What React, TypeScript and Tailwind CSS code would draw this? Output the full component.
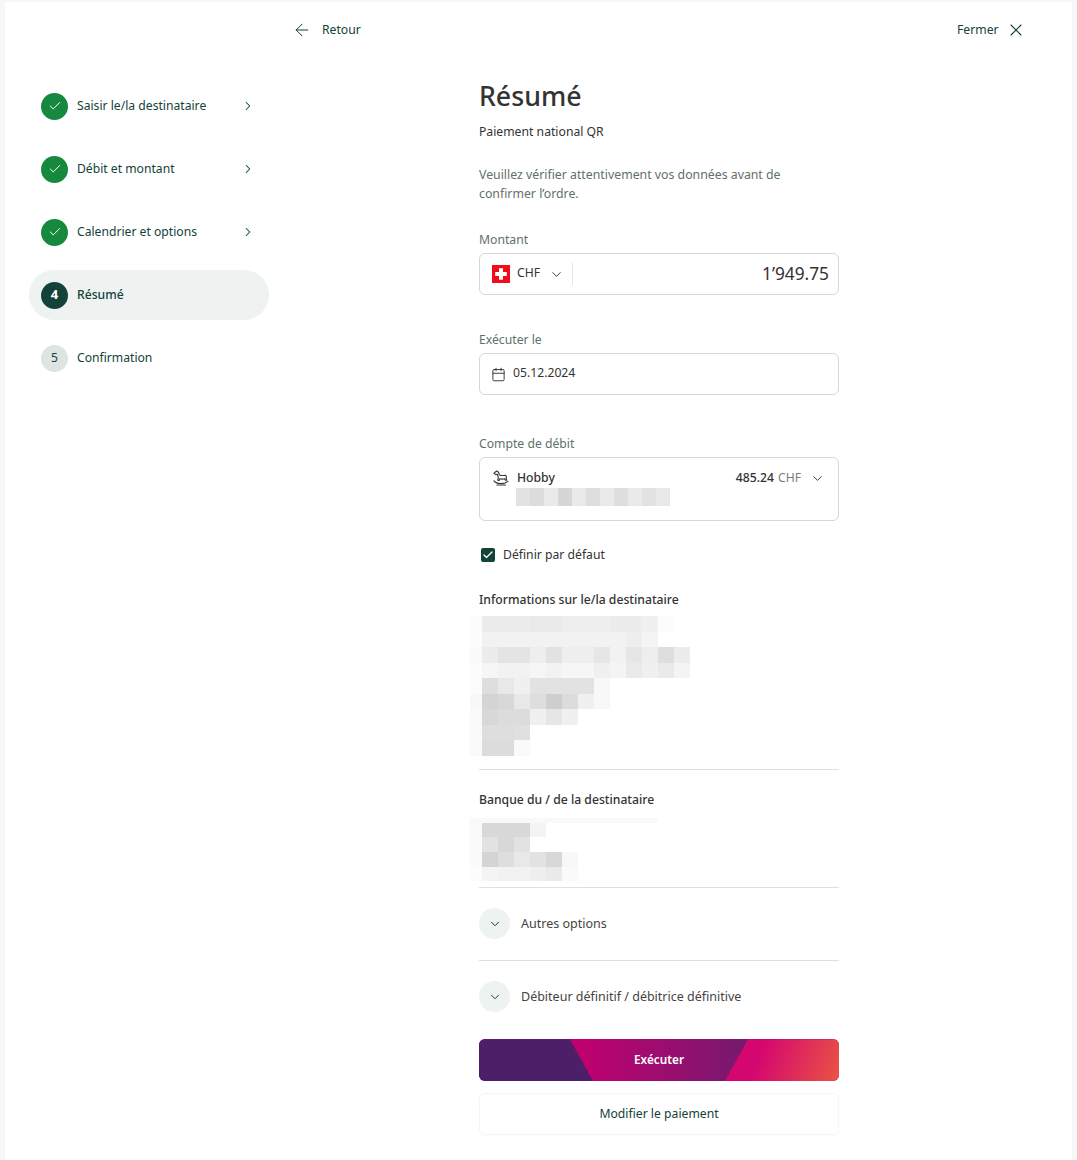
import { ArrowLeft, Check, ChevronDown, ChevronRight, X, Calendar } from 'lucide-react';

const font = { fontFamily: '"Noto Sans", sans-serif' };

const steps = [
  { label: 'Saisir le/la destinataire', state: 'done' },
  { label: 'Débit et montant', state: 'done' },
  { label: 'Calendrier et options', state: 'done' },
  { label: 'Résumé', state: 'active', num: 4 },
  { label: 'Confirmation', state: 'todo', num: 5 },
];

// masked personal data in the reference: rows of grey squares, each value is the grey level
const recipientMosaic = [
  [252, 236, 236, 236, 234, 234, 238, 238, 238, 236, 236, 240, 252, 255, 255, 255],
  [252, 242, 242, 242, 242, 242, 242, 242, 242, 242, 238, 244, 255, 255, 255, 255],
  [250, 236, 228, 228, 238, 226, 238, 238, 230, 242, 230, 238, 222, 236, 255, 255],
  [252, 246, 242, 242, 246, 242, 246, 246, 240, 244, 234, 240, 234, 244, 255, 255],
  [252, 222, 232, 240, 226, 226, 226, 226, 248, 255, 255, 255, 255, 255, 255, 255],
  [248, 212, 216, 232, 222, 206, 220, 240, 248, 255, 255, 255, 255, 255, 255, 255],
  [250, 216, 220, 220, 240, 230, 240, 255, 255, 255, 255, 255, 255, 255, 255, 255],
  [250, 222, 222, 224, 255, 255, 255, 255, 255, 255, 255, 255, 255, 255, 255, 255],
  [250, 220, 220, 250, 255, 255, 255, 255, 255, 255, 255, 255, 255, 255, 255, 255],
];

const bankMosaic = [
  [250, 216, 216, 216, 244, 255, 255, 255],
  [250, 226, 216, 226, 255, 255, 255, 255],
  [250, 212, 222, 232, 226, 216, 248, 255],
  [252, 244, 242, 242, 238, 234, 250, 255],
];

const accountMosaic = [226, 220, 234, 214, 234, 222, 234, 222, 234, 226, 232];

function Mosaic({ rows, rowClass }: { rows: number[][]; rowClass: string }) {
  return (
    <div className="flex flex-col ml-[-9px]">
      {rows.map((row, i) => (
        <div key={i} className={'flex ' + rowClass}>
          {row.map((v, j) => (
            <div
              key={j}
              className={j === 0 ? 'w-3 h-full' : 'w-4 h-full'}
              style={{ backgroundColor: `rgb(${v},${v},${v})` }}
            />
          ))}
        </div>
      ))}
    </div>
  );
}

function StepRow({ step }: { step: (typeof steps)[number] }) {
  return (
    <div
      className={
        'flex items-center h-[50px] w-[240px] pl-[12px] rounded-full ' +
        (step.state === 'active' ? 'bg-[#eef2f1]' : '')
      }
    >
      {step.state === 'done' && (
        <div className="w-[27px] h-[27px] rounded-full bg-[#16893f] flex items-center justify-center text-white">
          <Check size={14} strokeWidth={1.7} />
        </div>
      )}
      {step.state === 'active' && (
        <div className="w-[27px] h-[27px] rounded-full bg-[#134239] flex items-center justify-center text-white text-[13px] font-bold">
          {step.num}
        </div>
      )}
      {step.state === 'todo' && (
        <div className="w-[27px] h-[27px] rounded-full bg-[#dde4e2] flex items-center justify-center text-[#134239] text-[12px]">
          {step.num}
        </div>
      )}
      <span
        className={
          'ml-[9px] text-[12.15px] leading-[18px] text-[#134239] flex-1 ' +
          (step.state === 'active' ? 'font-medium' : '')
        }
      >
        {step.label}
      </span>
      {step.state === 'done' && <ChevronRight size={14} strokeWidth={1.8} className="text-[#134239] mr-[14px]" />}
    </div>
  );
}

function Flag() {
  return (
    <svg width="18" height="18" viewBox="0 0 18 18">
      <rect width="18" height="18" fill="#f00c18" />
      <path d="M7 3.2h4v3.8h3.8v4H11v3.8H7V11H3.2V7H7z" fill="#fff" />
    </svg>
  );
}

function RockingHorse() {
  return (
    <svg width="16" height="16" viewBox="0 0 16 16" fill="none" stroke="#333" strokeWidth="1.1" strokeLinecap="round" strokeLinejoin="round">
      <path d="M1 3.2 3.6 1l2 1.2.8 2.8c1.8.6 4.4.6 6 .2l1 1.1-.3 2.2.7 1.6-1.4.2-.7-1.6c-1.6.5-3.4.5-4.8 0l-.8 1.7-1.4-.2.7-2.6-1.1-3.4-1.5.4z" />
      <path d="M1 10.8c2.6 3.5 10.5 3.7 14 .6" />
      <path d="M4 15h8.5" />
    </svg>
  );
}

function Expander({ label }: { label: string }) {
  return (
    <div className="flex items-center">
      <div className="w-[31px] h-[31px] rounded-full bg-[#eef2f1] flex items-center justify-center">
        <ChevronDown size={14} strokeWidth={1.7} className="text-[#134239]" />
      </div>
      <span className="ml-[11px] text-[12.5px] leading-[18px] text-[#444]">{label}</span>
    </div>
  );
}

export default function App() {
  return (
    <div style={font} className="w-[1077px] h-[1160px] bg-[#f7f7f7] pl-[5px] pr-[5px] pt-[2px] overflow-hidden">
      <div className="bg-white h-full flex">
        <aside className="w-[474px] pl-[24px] pt-[79px] shrink-0">
          <div className="flex flex-col gap-[13px]">
            {steps.map((s) => (
              <StepRow key={s.label} step={s} />
            ))}
          </div>
        </aside>

        <div className="flex-1 relative">
          <div className="absolute left-[-185px] top-[18px] flex items-center text-[#134239]">
            <ArrowLeft size={20} strokeWidth={1.2} className="-ml-[2px]" />
            <span className="ml-[10px] text-[12.2px] leading-[18px]">Retour</span>
          </div>
          <div className="absolute left-[478px] top-[18px] flex items-center text-[#134239]">
            <span className="text-[12.2px] leading-[18px]">Fermer</span>
            <X size={20} strokeWidth={1.3} className="ml-[7px]" />
          </div>

          <main className="w-[360px] pt-[75px]">
            <h1 className="text-[26.7px] leading-[38px] font-medium text-[#333]">Résumé</h1>
            <p className="mt-[8px] text-[12.2px] leading-[18px] text-[#333]">Paiement national QR</p>
            <p className="mt-[24px] text-[12.3px] leading-[19px] text-[#5f7069]">
              Veuillez vérifier attentivement vos données avant de
              <br />
              confirmer l’ordre.
            </p>

            <label className="block mt-[28px] text-[12.2px] leading-[18px] text-[#5f7069]">Montant</label>
            <div className="mt-[4px] h-[42px] border border-[#d5d8d7] rounded-[6px] flex items-center pl-[12px] pr-[9px]">
              <Flag />
              <span className="ml-[7px] text-[12.2px] text-[#333] -mt-[2px]">CHF</span>
              <ChevronDown size={15} strokeWidth={1.5} className="ml-[9px] text-[#333]" />
              <div className="ml-[8px] w-px h-[22px] bg-[#e3e5e4]" />
              <span className="flex-1 text-right text-[17.3px] text-[#333]">1’949.75</span>
            </div>

            <label className="block mt-[36px] text-[12.2px] leading-[18px] text-[#5f7069]">Exécuter le</label>
            <div className="mt-[4px] h-[42px] border border-[#d5d8d7] rounded-[6px] flex items-center pl-[11px]">
              <Calendar size={15} strokeWidth={1.5} className="text-[#333]" />
              <span className="ml-[7px] text-[12.2px] text-[#333] -mt-[2px]">05.12.2024</span>
            </div>

            <label className="block mt-[40px] text-[12.2px] leading-[18px] text-[#5f7069]">Compte de débit</label>
            <div className="mt-[4px] h-[64px] border border-[#d5d8d7] rounded-[6px] pl-[13px] pr-[13px] pt-[11px]">
              <div className="flex items-center h-[18px]">
                <RockingHorse />
                <span className="ml-[8px] text-[12.2px] font-medium text-[#333]">Hobby</span>
                <span className="ml-auto text-[12.2px] font-medium text-[#333]">485.24</span>
                <span className="ml-[4px] text-[12.2px] text-[#7a7f7d]">CHF</span>
                <ChevronDown size={15} strokeWidth={1.5} className="ml-[9px] text-[#333]" />
              </div>
              <div className="flex ml-[23px] mt-[1px]">
                {accountMosaic.map((v, i) => (
                  <div key={i} className="w-[14px] h-[18px]" style={{ backgroundColor: `rgb(${v},${v},${v})` }} />
                ))}
              </div>
            </div>

            <div className="mt-[25px] flex items-center">
              <div className="ml-[2px] w-[14px] h-[14px] rounded-[2px] bg-[#134239] flex items-center justify-center text-white">
                <Check size={12} strokeWidth={2.6} />
              </div>
              <span className="ml-[8px] text-[12.2px] leading-[18px] text-[#333]">Définir par défaut</span>
            </div>

            <h2 className="mt-[27px] text-[12.2px] leading-[18px] font-medium text-[#333]">Informations sur le/la destinataire</h2>
            <div className="mt-[7px]">
              <Mosaic rows={recipientMosaic} rowClass="h-[15.5px]" />
            </div>
            <div className="mt-[13px] border-t border-[#dfe1e0]" />

            <h2 className="mt-[21px] text-[12.2px] leading-[18px] font-medium text-[#333]">Banque du / de la destinataire</h2>
            <div className="mt-[9px]">
              <div className="ml-[-9px] h-[5px] w-[188px] bg-[#f9f9f9]" />
              <Mosaic rows={bankMosaic} rowClass="h-[14.7px]" />
            </div>
            <div className="mt-[6px] border-t border-[#dfe1e0]" />

            <div className="pt-[20px] pb-[21px] border-b border-[#dfe1e0]">
              <Expander label="Autres options" />
            </div>
            <div className="pt-[20px]">
              <Expander label="Débiteur définitif / débitrice définitive" />
            </div>

            <button className="relative mt-[27px] w-full h-[42px] rounded-[6px] overflow-hidden text-white text-[11.8px] font-semibold bg-[linear-gradient(90deg,#c0006f_28%,#761a6e_74%)]">
              <span className="absolute inset-y-0 left-0 w-[114px] bg-[#4d1f68] [clip-path:polygon(0_0,91px_0,114px_100%,0_100%)]" />
              <span className="absolute inset-y-0 right-0 w-[114px] bg-[linear-gradient(110deg,#d4066f_30%,#ea5444_100%)] [clip-path:polygon(23px_0,100%_0,100%_100%,0_100%)]" />
              <span className="relative">Exécuter</span>
            </button>
            <button className="mt-[12px] w-full h-[42px] rounded-[6px] bg-white border border-[#f5f6f6] shadow-[0_1px_2px_rgba(0,0,0,0.02)] text-[12.2px] text-[#134239]">
              Modifier le paiement
            </button>
          </main>
        </div>
      </div>
    </div>
  );
}
